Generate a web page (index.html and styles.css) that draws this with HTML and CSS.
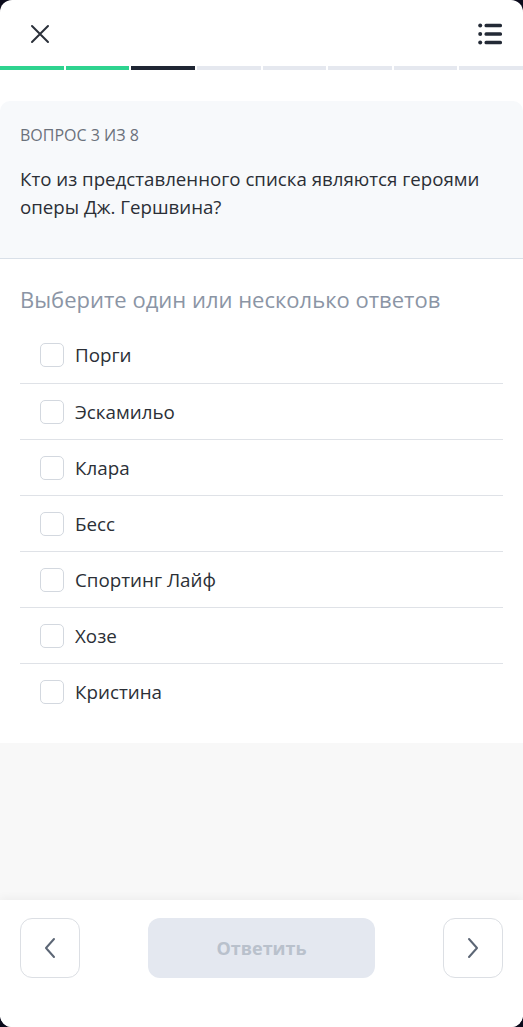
FILE: index.html
```html
<!DOCTYPE html>
<html>
<head>
  <meta charset="utf-8">
  <meta name="viewport" content="width=device-width, initial-scale=1.0">
  <title>Вопрос 3 из 8</title>
  <link rel="stylesheet" href="styles.css">
</head>
<body>
  <div class="screen">
    <div class="topbar">
      <a class="icon-btn close">
        <svg width="20" height="20" viewBox="0 0 20 20"><path d="M2 2 L18 18 M18 2 L2 18" stroke="#2b303a" stroke-width="2" stroke-linecap="round"/></svg>
      </a>
      <a class="icon-btn list">
        <svg width="24" height="22" viewBox="0 0 24 22"><circle cx="2.2" cy="2.5" r="2" fill="#232a36"/><circle cx="2.2" cy="11" r="2" fill="#232a36"/><circle cx="2.2" cy="19.5" r="2" fill="#232a36"/><rect x="6.5" y="0.8" width="17.5" height="3.4" rx="1.5" fill="#232a36"/><rect x="6.5" y="9.3" width="17.5" height="3.4" rx="1.5" fill="#232a36"/><rect x="6.5" y="17.8" width="17.5" height="3.4" rx="1.5" fill="#232a36"/></svg>
      </a>
    </div>
    <div class="progress">
      <span class="step done"></span>
      <span class="step done"></span>
      <span class="step current"></span>
      <span class="step"></span>
      <span class="step"></span>
      <span class="step"></span>
      <span class="step"></span>
      <span class="step"></span>
    </div>

    <div class="sheet">
      <div class="question">
        <div class="counter">ВОПРОС 3 ИЗ 8</div>
        <p class="question-text">Кто из представленного списка являются героями оперы Дж. Гершвина?</p>
      </div>
      <div class="answers">
        <div class="hint">Выберите один или несколько ответов</div>
        <label class="option"><span class="box"></span>Порги</label>
        <label class="option"><span class="box"></span>Эскамильо</label>
        <label class="option"><span class="box"></span>Клара</label>
        <label class="option"><span class="box"></span>Бесс</label>
        <label class="option"><span class="box"></span>Спортинг Лайф</label>
        <label class="option"><span class="box"></span>Хозе</label>
        <label class="option"><span class="box"></span>Кристина</label>
      </div>
    </div>

    <div class="filler"></div>

    <div class="footer">
      <a class="nav-btn">
        <svg width="14" height="22" viewBox="0 0 14 22"><path d="M11 2 L3 11 L11 20" fill="none" stroke="#5c6675" stroke-width="2" stroke-linecap="round" stroke-linejoin="round"/></svg>
      </a>
      <a class="submit">Ответить</a>
      <a class="nav-btn">
        <svg width="14" height="22" viewBox="0 0 14 22"><path d="M3 2 L11 11 L3 20" fill="none" stroke="#5c6675" stroke-width="2" stroke-linecap="round" stroke-linejoin="round"/></svg>
      </a>
    </div>
  </div>
</body>
</html>
```

FILE: styles.css
```css
html, body {
  margin: 0;
  height: 100%;
}
body {
  background: #0b0b1c;
  font-family: "Open Sans", "Noto Sans", sans-serif;
  color: #2b2f36;
}

.screen {
  display: flex;
  flex-direction: column;
  height: 100%;
  background: #fff;
  border-radius: 12px;
  overflow: hidden;
}

.topbar {
  height: 66px;
  padding: 0 20px 0 30px;
  display: flex;
  align-items: center;
  justify-content: space-between;
  flex-shrink: 0;
}
.icon-btn {
  display: flex;
  cursor: pointer;
}
.icon-btn.close {
  margin-top: 2px;
}
.icon-btn.list {
  margin-top: 1px;
  margin-right: 1px;
}

.progress {
  display: flex;
  gap: 2px;
  height: 4px;
  flex-shrink: 0;
}
.progress .step {
  flex: 1;
  background: #e5e8ef;
}
.progress .step.done {
  background: #2ed38f;
}
.progress .step.current {
  background: #1f2633;
}

.sheet {
  background: #fff;
  padding-top: 31px;
  flex-shrink: 0;
}

.question {
  background: #f7f9fb;
  border-radius: 10px 10px 0 0;
  border-bottom: 1px solid #d9e0e8;
  padding: 24px 20px 37px;
}
.counter {
  font-size: 16px;
  line-height: 20px;
  color: #6b717b;
}
.question-text {
  margin: 20px 0 0;
  font-size: 18.7px;
  line-height: 28px;
  color: #2b2f36;
}

.answers {
  padding: 26px 20px 24px;
}
.hint {
  font-size: 22px;
  line-height: 28px;
  color: #8b95a5;
  margin-bottom: 14px;
}
.option {
  display: flex;
  align-items: center;
  gap: 11px;
  height: 55px;
  padding-left: 20px;
  border-top: 1px solid #dfe2e7;
  font-size: 18.8px;
  color: #2b2f36;
  cursor: pointer;
}
.option:first-of-type {
  border-top: none;
  height: 56px;
}
.option .box {
  width: 22px;
  height: 22px;
  border: 1px solid #d3d8df;
  border-radius: 5px;
  background: #fff;
}

.filler {
  flex: 1;
  background: #f8f8f8;
}

.footer {
  display: flex;
  justify-content: space-between;
  align-items: flex-start;
  height: 127px;
  padding: 18px 20px 0;
  box-sizing: border-box;
  background: #fff;
  box-shadow: 0 -3px 8px rgba(0, 0, 0, 0.04);
  flex-shrink: 0;
}
.nav-btn {
  width: 58px;
  height: 58px;
  border: 1px solid #dcdfe4;
  border-radius: 12px;
  display: flex;
  align-items: center;
  justify-content: center;
  cursor: pointer;
}
.submit {
  width: 227px;
  height: 60px;
  border-radius: 12px;
  background: #e4e8f0;
  color: #b9c1cc;
  font-size: 18px;
  font-weight: 700;
  display: flex;
  align-items: center;
  justify-content: center;
  cursor: pointer;
}
```
